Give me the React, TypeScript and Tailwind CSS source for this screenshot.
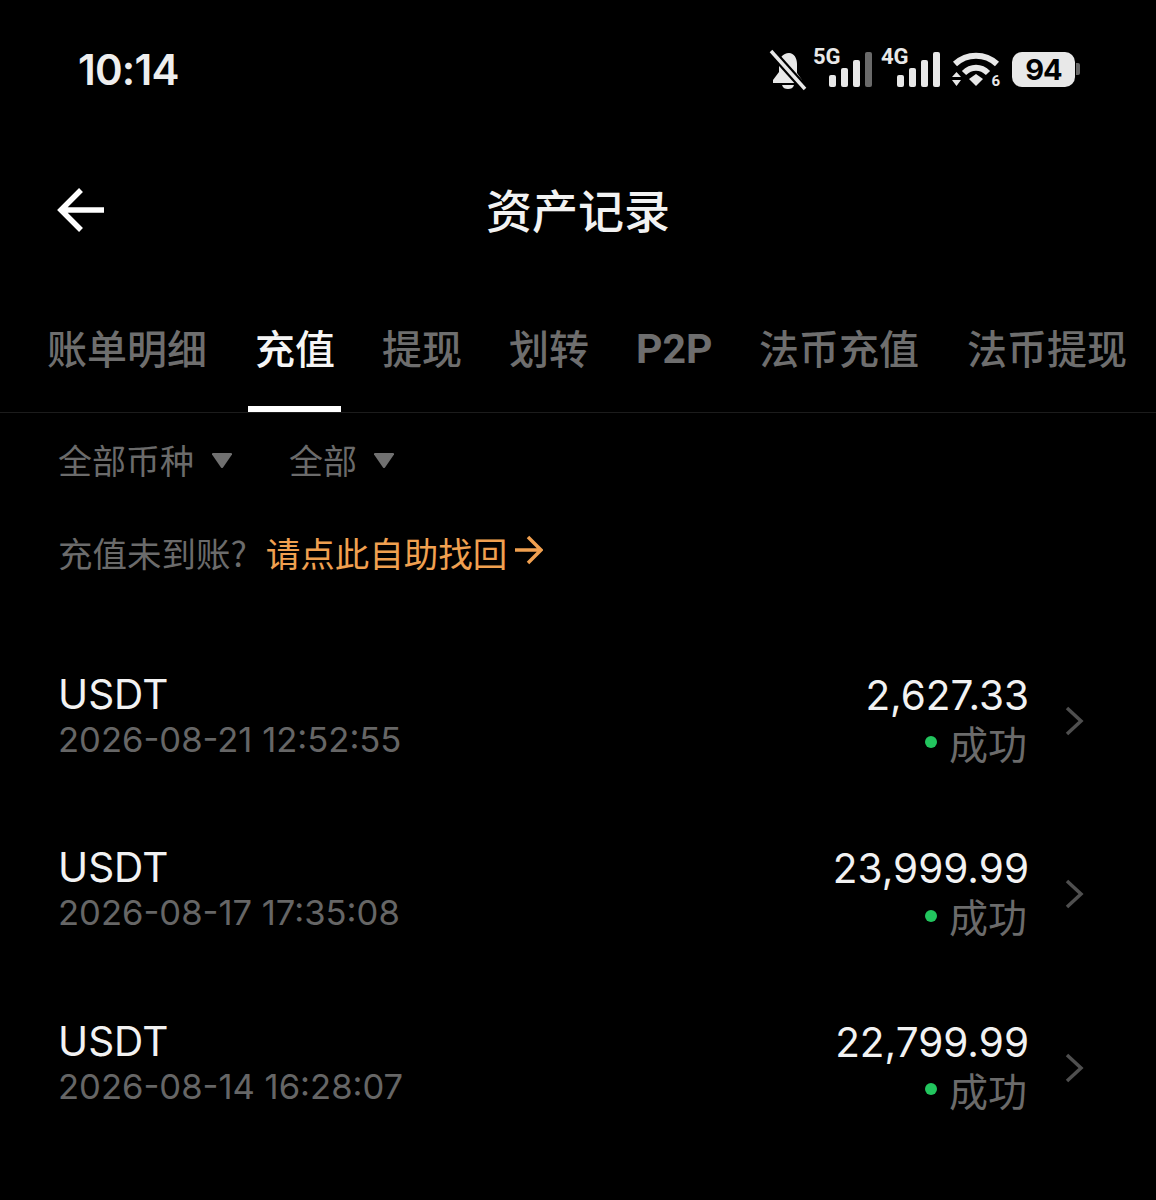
import React from 'react';

const records = [
  { coin: 'USDT', time: '2026-08-21 12:52:55', amount: '2,627.33', status: '成功' },
  { coin: 'USDT', time: '2026-08-17 17:35:08', amount: '23,999.99', status: '成功' },
  { coin: 'USDT', time: '2026-08-14 16:28:07', amount: '22,799.99', status: '成功' },
];

const Signal = ({ label, dim }: { label: string; dim?: boolean }) => (
  <div className="relative w-[60px] h-[40px]">
    <span className="absolute left-[1px] top-[-4px] text-[22px] leading-none font-bold text-[#e8e8e8] font-['Roboto',sans-serif]">{label}</span>
    <div className="absolute right-0 bottom-[3px] flex items-end gap-[5px]">
      <div className="w-[7px] h-[12px] rounded-[2px] bg-[#e8e8e8]" />
      <div className="w-[7px] h-[19px] rounded-[2px] bg-[#e8e8e8]" />
      <div className="w-[7px] h-[27px] rounded-[2px] bg-[#e8e8e8]" />
      <div className={`w-[7px] h-[35px] rounded-[2px] ${dim ? 'bg-[#6a6a6a]' : 'bg-[#e8e8e8]'}`} />
    </div>
  </div>
);

const StatusBar = () => (
  <div className="flex items-center justify-between h-[140px] pl-[78px] pr-[76px]">
    <span className="text-[42px] leading-none font-semibold text-[#eeeeee] tracking-[-0.8px] font-['Inter',sans-serif]">10:14</span>
    <div className="flex items-center">
      <svg width="38" height="42" viewBox="0 0 38 42" className="mr-[5px]">
        <path d="M20 4c-6 0-10 5-10 11v8l-6 8v3h29v-3l-5-7v-9c0-6-3-11-8-11z" fill="#e8e8e8" />
        <path d="M13 36c1 3 3 4 6 4s5-1 6-4z" fill="#e8e8e8" />
        <path d="M2 2l34 38" stroke="#000" strokeWidth="8" />
        <path d="M2 2l34 38" stroke="#e8e8e8" strokeWidth="3.5" />
      </svg>
      <Signal label="5G" dim />
      <div className="w-[8px]" />
      <Signal label="4G" />
      <div className="relative w-[48px] h-[40px] ml-[12px] mr-[12px]">
        <svg width="48" height="40" viewBox="0 0 48 40">
          <path d="M3 14C15 3 33 3 45 14" fill="none" stroke="#e8e8e8" strokeWidth="6" />
          <path d="M12 23C19 16 29 16 36 23" fill="none" stroke="#e8e8e8" strokeWidth="6" />
          <path d="M17 29l7-5 7 5-7 7z" fill="#e8e8e8" />
          <path d="M0 27l4.500-5 4.500 5zM0 30h9l-4.500 6z" fill="#e8e8e8" />
        </svg>
        <span className="absolute right-0 top-[24px] text-[15px] leading-[15px] font-bold text-[#e8e8e8] font-['Roboto',sans-serif]">6</span>
      </div>
      <div className="flex items-center mb-[2px]">
        <div className="w-[63px] h-[35px] rounded-[10px] bg-[#e8e8e8] flex items-center justify-center text-[29px] leading-none font-bold tracking-[-1px] text-black font-['Inter',sans-serif]">94</div>
        <div className="w-[4px] h-[12px] ml-[1px] bg-[#666666] rounded-r-[2px]" />
      </div>
    </div>
  </div>
);

export default function App() {
  return (
    <div className="w-[1156px] h-[1200px] overflow-hidden bg-black font-['Inter','Noto_Sans_CJK_SC',sans-serif]">
      <StatusBar />
      <div className="relative flex items-center justify-center h-[140px] pb-[4px]">
        <svg width="50" height="46" viewBox="0 0 50 46" fill="none" stroke="white" strokeWidth="5.5" className="absolute left-[57px] top-[47px]">
          <path d="M47 23H6M24 3L4 23l20 20" />
        </svg>
        <h1 className="text-[46px] leading-none font-medium text-[#f2f2f2] font-['Noto_Sans_CJK_SC',sans-serif]">资产记录</h1>
      </div>
      <div className="relative flex items-center h-[133px] pt-[1px] border-b border-[#1c1c1c] pl-[47px] text-[40px] leading-none font-medium text-[#6e6e6e] font-['Noto_Sans_CJK_SC',sans-serif]">
        <span className="w-[208px]">账单明细</span>
        <span className="w-[127px] text-[#f5f5f5]">充值</span>
        <span className="w-[127px]">提现</span>
        <span className="w-[126px]">划转</span>
        <span className="w-[124px] pt-[5px] pl-[1px] text-[41px] font-['Roboto',sans-serif] font-bold">P2P</span>
        <span className="w-[208px] whitespace-nowrap">法币充值</span>
        <span className="whitespace-nowrap">法币提现</span>
        <div className="absolute left-[248px] bottom-0 w-[93px] h-[6px] bg-white" />
      </div>
      <div className="flex items-center h-[94px] pl-[58px] text-[34px] leading-none text-[#6b6b6b] font-['Noto_Sans_CJK_SC',sans-serif]">
        <span>全部币种</span>
        <svg width="22" height="17" viewBox="0 0 22 17" className="ml-[17px] mr-[56px]"><path d="M2 1h18q1.500 0 1 1.500l-9 13q-1 1-2 0l-9-13q-.5-1.500 1-1.500z" fill="#707070" /></svg>
        <span>全部</span>
        <svg width="22" height="17" viewBox="0 0 22 17" className="ml-[16px]"><path d="M2 1h18q1.500 0 1 1.500l-9 13q-1 1-2 0l-9-13q-.5-1.500 1-1.500z" fill="#707070" /></svg>
      </div>
      <div className="flex items-center h-[92px] pl-[58px] pb-[2px] text-[34.5px] leading-none text-[#6b6b6b] font-['Noto_Sans_CJK_SC',sans-serif]">
        <span>充值未到账?</span>
        <span className="ml-[19px] text-[#f0a050]">请点此自助找回</span>
        <svg width="30" height="32" viewBox="0 0 30 32" fill="none" stroke="#f0a050" strokeWidth="3.5" className="ml-[6px] mb-[4px]">
          <path d="M2 16h25M15 3l13 13-13 13" />
        </svg>
      </div>
      <div className="flex flex-col mt-[36px]">
        {records.map((r) => (
          <div key={r.time} className="flex items-center h-[173.5px] pl-[58px] pr-[72px] pb-[4px]">
            <div className="flex flex-col mb-[8px]">
              <span className="text-[40.5px] leading-[46px] text-[#f2f2f2]">{r.coin}</span>
              <span className="text-[34.6px] leading-[42px] text-[#666666]">{r.time}</span>
            </div>
            <div className="ml-auto flex flex-col items-end mb-[2px] mr-[37px]">
              <span className="text-[40.5px] leading-[46px] -mr-[2px] text-[#f2f2f2]">{r.amount}</span>
              <div className="flex items-center">
                <div className="w-[12px] h-[12px] rounded-full bg-[#22c55e] mr-[12px] mt-[1px]" />
                <span className="text-[39px] leading-[46px] text-[#6b6b6b] font-['Noto_Sans_CJK_SC',sans-serif]">{r.status}</span>
              </div>
            </div>
            <svg width="20" height="30" viewBox="0 0 20 30" fill="none" stroke="#4f4f4f" strokeWidth="3.5" className="mt-[2px]">
              <path d="M3 2l14 13L3 28" />
            </svg>
          </div>
        ))}
      </div>
    </div>
  );
}
